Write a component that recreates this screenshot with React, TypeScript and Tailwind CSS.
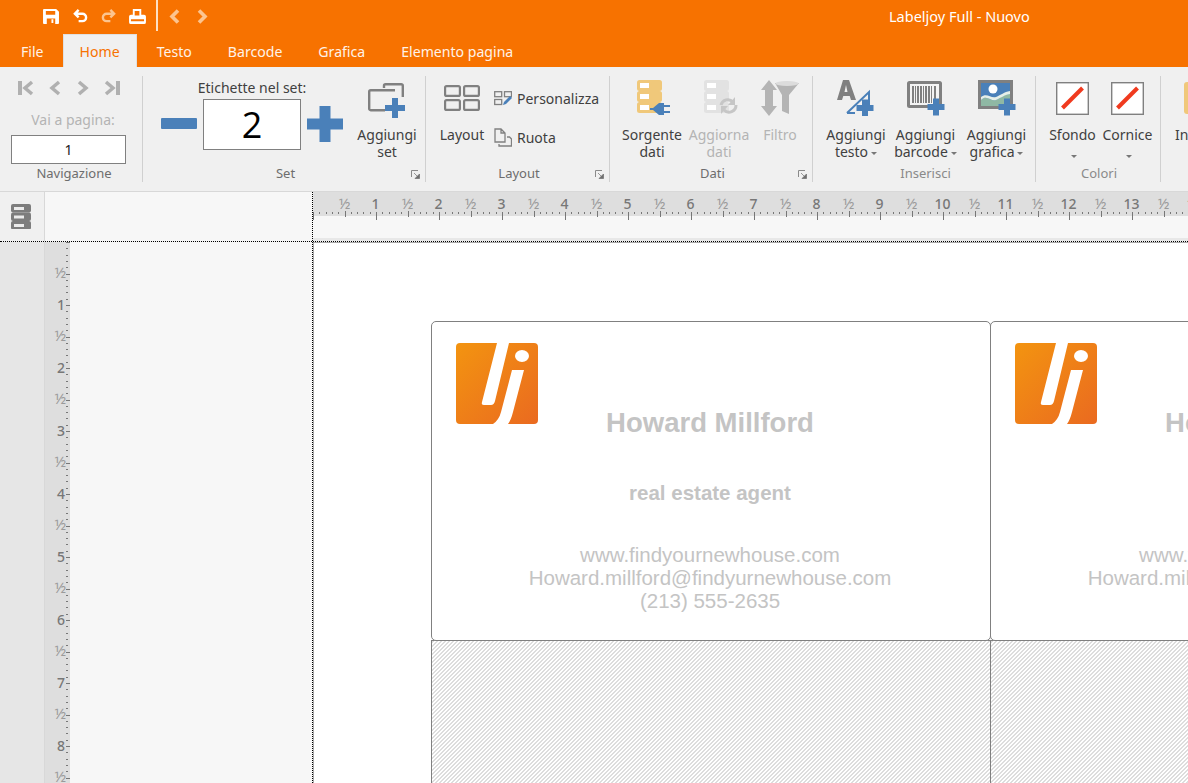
import type { ReactNode } from "react";

const BLUE = "#4a80b9";
const GRAY = "#808080";
const TICKS = Array.from({ length: 141 }, (_, i) => i);

const Plus = ({ x, y, s = 14, t = 5 }: { x: number; y: number; s?: number; t?: number }) => (
  <path
    fill={BLUE}
    stroke="none"
    d={`M${x - t / 2} ${y - s / 2}h${t}v${(s - t) / 2}h${(s - t) / 2}v${t}h${-(s - t) / 2}v${(s - t) / 2}h${-t}v${-(s - t) / 2}h${-(s - t) / 2}v${-t}h${(s - t) / 2}z`}
  />
);

const Launcher = () => (
  <svg width="9" height="9" viewBox="0 0 9 9" className="mb-[3px]">
    <path d="M.5 7V.5H7" fill="none" stroke="#8a8a8a" />
    <path d="M3 3l4 4M8.5 4v4.5H4z" stroke="#6f6f6f" fill="#6f6f6f" strokeWidth=".7" />
  </svg>
);

const Caret = () => <span className="ml-[3px] inline-block align-middle border-x-[3px] border-t-[3px] border-x-transparent border-t-[#777]" />;

function Group({ label, width, launcher, children, muted, shift = "pl-[3px]" }: { label: string; width: number; launcher?: boolean; muted?: boolean; shift?: string; children: ReactNode }) {
  return (
    <div className="flex flex-col shrink-0 h-full border-r border-[#d0d0d0]" style={{ width }}>
      <div className="flex-1 flex min-h-0">{children}</div>
      <div className={`h-[16px] pb-[2px] relative flex items-center justify-center ${shift}`}>
        <span className={`text-[13px] leading-[16px] ${muted ? "text-[#8a8a8a]" : "text-[#6d6d6d]"}`}>{label}</span>
        {launcher && <span className="absolute right-[5px] bottom-0 flex"><Launcher /></span>}
      </div>
    </div>
  );
}

function BigButton({ icon, lines, width, caret, disabled, className = "" }: { icon: ReactNode; lines: string[]; width: number; caret?: boolean; disabled?: boolean; className?: string }) {
  return (
    <div className={`flex flex-col items-center shrink-0 ${className}`} style={{ width }}>
      <div className="h-[50px] pb-[6px] flex items-center justify-center shrink-0">{icon}</div>
      <div className={`text-center text-[14px] leading-[17px] whitespace-nowrap ${disabled ? "text-[#b4b4b4]" : "text-[#404040]"}`}>
        {lines.map((l, i) => (
          <div key={l}>
            {l}
            {caret && i === lines.length - 1 && <Caret />}
          </div>
        ))}
      </div>
    </div>
  );
}

const SaveIcon = () => (
  <svg width="16" height="15" viewBox="0 0 17 16" className="mr-px"><path fill="#fff" fillRule="evenodd" d="M1 0h13l3 3v12a1 1 0 0 1-1 1H1a1 1 0 0 1-1-1V1a1 1 0 0 1 1-1zm2 2v4h10V2zm1 8v6h9v-6zm5 1h2v4H9z" /></svg>
);
const UndoIcon = ({ c = "#fff", flip = false }: { c?: string; flip?: boolean }) => (
  <svg width="15" height="14" viewBox="0 0 16 15" style={flip ? { transform: "scaleX(-1)" } : undefined}>
    <path d="M6 1L2 5l4 4M2 5h8a4 4 0 0 1 0 8H6" fill="none" stroke={c} strokeWidth="2.6" />
  </svg>
);
const PrintIcon = () => (
  <svg width="17" height="15" viewBox="0 0 18 16"><path fill="#fff" fillRule="evenodd" d="M4 0h9v6h3a2 2 0 0 1 2 2v6a2 2 0 0 1-2 2H2a2 2 0 0 1-2-2V8a2 2 0 0 1 2-2h2zm2 2v5h5V2zM2 11v2h14v-2z" /></svg>
);
const Chevron = ({ dir, c }: { dir: "l" | "r"; c: string }) => (
  <svg width="11" height="15" viewBox="0 0 11 15"><path d={dir === "l" ? "M9 1.500L3 7.500l6 6" : "M2 1.500l6 6-6 6"} fill="none" stroke={c} strokeWidth="3.600" /></svg>
);

const NavIcon = ({ d, w, bar }: { d: string; w: number; bar?: number }) => (
  <svg width={w} height="16" viewBox={`0 0 ${w} 16`}>
    <path d={d} fill="none" stroke="#b0b0b0" strokeWidth="3.500" />
    {bar !== undefined && <rect x={bar} y="1" width="4" height="14" fill="#b0b0b0" />}
  </svg>
);

const AddSetIcon = () => (
  <svg width="38" height="36" viewBox="0 0 38 36" fill="none" stroke={GRAY} strokeWidth="2.400" className="mt-[5px]">
    <path d="M16 5V2.700a1.500 1.500 0 0 1 1.500-1.500H33.300a1.500 1.500 0 0 1 1.500 1.500V14" />
    <path d="M27 7.200H2.700A1.500 1.500 0 0 0 1.200 8.700v17a1.500 1.500 0 0 0 1.500 1.500H17" />
    <Plus x={27} y={25} s={20} t={6} />
  </svg>
);
const LayoutIcon = () => (
  <svg width="36" height="26" viewBox="0 0 36 26" fill="none" stroke={GRAY} strokeWidth="2.200">
    <rect x="1.100" y="1.100" width="14.800" height="9.800" rx="1.500" />
    <rect x="20.100" y="1.100" width="14.800" height="9.800" rx="1.500" />
    <rect x="1.100" y="15.100" width="14.800" height="9.800" rx="1.500" />
    <rect x="20.100" y="15.100" width="14.800" height="9.800" rx="1.500" />
  </svg>
);
const CustomizeIcon = () => (
  <svg width="18" height="15" viewBox="0 0 18 15">
    <g fill="none" stroke={GRAY} strokeWidth="1.300">
      <rect x=".7" y=".7" width="7" height="5" />
      <rect x="10.500" y=".7" width="7" height="5" />
      <rect x=".7" y="8.500" width="7" height="5" />
    </g>
    <path d="M9 14l1-3 6-6 2 2-6 6z" fill={BLUE} />
  </svg>
);
const RotateIcon = () => (
  <svg width="18" height="19" viewBox="0 0 18 19" fill="none" stroke={GRAY} strokeWidth="1.300">
    <path d="M1 1h6l4 4v9H1zM7 1v4h4" />
    <path d="M13 9h2.500l2 2v7H5v-2" />
  </svg>
);
const Db = ({ fill }: { fill: string }) => (
  <>
    {[0, 11, 22].map((y) => (
      <g key={y}>
        <rect x="0" y={y} width="25" height="11" rx="2.500" fill={fill} />
        <rect x="3" y={y + 3} width="9" height="5" fill="#fff" />
      </g>
    ))}
  </>
);
const SourceIcon = () => (
  <svg width="35" height="36" viewBox="0 0 35 36" className="ml-[5px]">
    <Db fill="#f0c87a" />
    <path d="M13 28h3l6-5h5v12h-5l-6-5h-3zM27 25h6v2h-6zM27 31h6v2h-6z" fill={BLUE} />
  </svg>
);
const RefreshIcon = () => (
  <svg width="35" height="36" viewBox="0 0 35 36" className="ml-[4px]">
    <Db fill="#e2e2e2" />
    <g fill="none" stroke="#c6c6c6" strokeWidth="3">
      <path d="M17 25a7 7 0 0 1 12-3M32 25a7 7 0 0 1-12 5" />
    </g>
    <path d="M31 17v8h-7zM17 34v-8h7z" fill="#c6c6c6" />
  </svg>
);
const FilterIcon = () => (
  <svg width="38" height="36" viewBox="0 0 38 36">
    <path d="M8 0l8 10h-4v16h4l-8 10-8-10h4V10H0z" fill="#b4b4b4" />
    <path d="M14 3h24l-10 12v19l-7-3V15z" fill="#b4b4b4" />
    <ellipse cx="26" cy="3.500" rx="11.500" ry="2.500" fill="#dcdcdc" />
  </svg>
);
const AddTextIcon = () => (
  <svg width="38" height="36" viewBox="0 0 38 36">
    <path fillRule="evenodd" d="M6 0h6l7 20h-5l-1.300-4H6.300L5 20H0zm3 5L7.500 12h3z" fill={GRAY} />
    <path d="M10 33L32 12v14M10 33h8" stroke={BLUE} strokeWidth="2" fill="none" />
    <Plus x={28} y={28} s={17} t={6} />
  </svg>
);
const AddBarcodeIcon = () => (
  <svg width="38" height="35" viewBox="0 0 38 35">
    <rect x="1.500" y="1.500" width="32" height="24" rx="1" fill="#f4f4f4" stroke={GRAY} strokeWidth="3" />
    {[5, 8, 10, 13, 16, 18, 21, 24, 27].map((x, i) => (
      <rect key={x} x={x} y="5" width={i % 3 === 1 ? 1 : 2} height="17" fill={GRAY} />
    ))}
    <Plus x={29} y={26} s={17} t={6} />
  </svg>
);
const AddImageIcon = () => (
  <svg width="38" height="36" viewBox="0 0 38 36">
    <rect x="1.500" y="1.500" width="32" height="26" fill={BLUE} stroke={GRAY} strokeWidth="3" />
    <circle cx="15" cy="9" r="4.500" fill="#fff" />
    <path d="M3 20c6-6 10 2 15 0s8-6 14-6v12H3z" fill="#8fb8a4" />
    <path d="M3 17c6-5 10 2 15 0s8-5 14-6v3c-6 1-9 4-14 6s-9-6-15 0z" fill="#e6efe8" />
    <Plus x={29} y={27} s={17} t={6} />
  </svg>
);
const Swatch = () => (
  <svg width="33" height="33" viewBox="0 0 33 33">
    <rect x=".7" y=".7" width="31.600" height="31.600" fill="#fff" stroke={GRAY} strokeWidth="1.400" />
    <path d="M6.500 26L26.500 6" stroke="#f03a1e" strokeWidth="4" />
  </svg>
);

const TopRuler = () => (
  <svg width="875" height="49" className="block">
    <rect width="875" height="24" fill="#dedede" />
    <rect y="24" width="875" height="25" fill="#f7f7f7" />
    <rect y="46" width="875" height="3" fill="#e8e8e8" />
    {TICKS.map((i) => {
      const x = Math.round(i * 6.3) + 0.5;
      if (i % 10 === 0)
        return (
          <g key={i}>
            <line x1={x} x2={x} y1="20" y2="28" stroke="#777" />
            {i > 0 && <text x={x - 1} y="17" textAnchor="middle" fontSize="14" fontWeight="500" fontFamily="Noto Sans" fill="#777">{i / 10}</text>}
          </g>
        );
      if (i % 5 === 0)
        return (
          <g key={i}>
            <line x1={x} x2={x} y1="19" y2="25" stroke="#777" />
            <text x={x - 1} y="17" textAnchor="middle" fontSize="15" fontFamily="Noto Sans" fill="#9a9a9a">½</text>
          </g>
        );
      return <line key={i} x1={x} x2={x} y1="20" y2="22" stroke="#777" />;
    })}
  </svg>
);

const LeftRuler = () => (
  <svg width="25" height="541" className="block">
    {TICKS.slice(0, 87).map((i) => {
      const y = Math.round(i * 6.3) + 0.5;
      if (i % 10 === 0)
        return (
          <g key={i}>
            <line y1={y} y2={y} x1="21" x2="29" stroke="#777" />
            {i > 0 && <text x="20" y={y + 4} textAnchor="end" fontSize="14" fontWeight="500" fontFamily="Noto Sans" fill="#777">{i / 10}</text>}
          </g>
        );
      if (i % 5 === 0)
        return (
          <g key={i}>
            <line y1={y} y2={y} x1="21" x2="26" stroke="#777" />
            <text x="21" y={y + 3} textAnchor="end" fontSize="15" fontFamily="Noto Sans" fill="#9a9a9a">½</text>
          </g>
        );
      return <line key={i} y1={y} y2={y} x1="21" x2="23" stroke="#777" />;
    })}
  </svg>
);

const Logo = () => (
  <svg width="82" height="81" viewBox="0 0 82 81" className="block">
    <defs>
      <linearGradient id="lj" x1="0" y1="0" x2="1" y2="1">
        <stop offset="0" stopColor="#f39410" />
        <stop offset="1" stopColor="#ea6a20" />
      </linearGradient>
    </defs>
    <rect width="82" height="81" rx="4" fill="url(#lj)" />
    <path d="M41 0h12L39 58q-1 4-4 4h-7q-3 0-2-3z" fill="#fff" />
    <ellipse cx="66" cy="13" rx="7" ry="6" fill="#fff" />
    <path d="M56 27h12L57 69q-2 8-5 12H37q6-4 8-12z" fill="#fff" />
  </svg>
);

function BusinessCard({ name }: { name: string }) {
  return (
    <div className="relative w-[560px] h-[320px] border border-[#808080] rounded-[5px] bg-white pr-[2px] text-center text-[#c4c4c4] font-['Liberation_Sans',sans-serif]">
      <div className="absolute left-[24px] top-[21px]"><Logo /></div>
      <div className="pt-[84px] text-[27.5px] leading-[34px] font-bold">{name}</div>
      <div className="mt-[41px] text-[20.5px] leading-[24px] font-bold">real estate agent</div>
      <div className="mt-[38px] text-[20.5px] leading-[23px]">
        <div>www.findyournewhouse.com</div>
        <div>Howard.millford@findyurnewhouse.com</div>
        <div>(213) 555-2635</div>
      </div>
    </div>
  );
}

const tabs = ["File", "Home", "Testo", "Barcode", "Grafica", "Elemento pagina"];
const hatch =
  "w-[560px] h-[200px] border-x border-t border-[#808080] bg-[linear-gradient(135deg,#dddddd_25%,#ffffff_25%,#ffffff_50%,#dddddd_50%,#dddddd_75%,#ffffff_75%)] bg-[length:4px_4px]";

export default function App() {
  return (
    <div className="w-[1188px] h-[783px] overflow-hidden flex flex-col bg-[#f0f0f0] font-['Noto_Sans',sans-serif]">
      {/* title bar */}
      <div className="h-[34px] shrink-0 bg-[#f77200] flex items-start relative">
        <div className="flex items-center h-[32px] pl-[43px] gap-[13px]">
          <SaveIcon />
          <UndoIcon />
          <UndoIcon c="#fcc48f" flip />
          <PrintIcon />
        </div>
        <div className="w-[2px] h-[31px] bg-[#fde0c4] ml-[10px]" />
        <div className="flex items-center h-[32px] ml-[11px] gap-[17px]">
          <Chevron dir="l" c="#fcc48f" />
          <Chevron dir="r" c="#fcc48f" />
        </div>
        <span className="absolute left-[889px] top-[7px] text-[14.5px] leading-[19px] text-white whitespace-nowrap">Labeljoy Full - Nuovo</span>
      </div>
      {/* tabs */}
      <div className="h-[33px] shrink-0 bg-[#f77200] flex pl-[3px]">
        {tabs.map((t) => (
          <div
            key={t}
            className={
              t === "Home"
                ? "ml-[1px] pl-[16px] pr-[16px] mr-[2px] flex items-center bg-[#f0f0f0] text-[#f77200] text-[14.1px] pt-[2px] border-x border-t border-[#e0e0e0]"
                : "px-[18px] flex items-center text-[#fff3e8] text-[14.1px] pt-[2px]"
            }
          >
            {t}
          </div>
        ))}
      </div>
      {/* ribbon */}
      <div className="h-[125px] shrink-0 border-b border-[#d8d8d8] pt-[9px] pb-[9px] flex overflow-hidden">
        <Group label="Navigazione" width={143} shift="pl-[6px]">
          <div className="w-full flex flex-col">
            <div className="flex items-center h-[24px] pl-[18px]">
              <NavIcon w={16} bar={0} d="M14 2L7 8l7 6" />
              <span className="w-[14px]" />
              <NavIcon w={13} d="M11 2L4 8l7 6" />
              <span className="w-[16px]" />
              <NavIcon w={13} d="M2 2l7 6-7 6" />
              <span className="w-[14px]" />
              <NavIcon w={16} bar={12} d="M2 2l7 6-7 6" />
            </div>
            <div className="mt-[10px] text-center pl-[4px] text-[14px] leading-[20px] text-[#b4b4b4]">Vai a pagina:</div>
            <div className="ml-[11px] mt-[5px] w-[115px] h-[29px] bg-white border border-[#808080] flex items-center justify-center text-[14px] text-[#222]">1</div>
          </div>
        </Group>
        <Group label="Set" width={283} launcher>
          <div className="flex items-start pl-[18px]">
            <div className="w-[36px] h-[11px] mt-[42px] bg-[#4a80b9] rounded-[1px]" />
            <div className="ml-[6px] w-[98px] flex flex-col items-center">
              <div className="text-[14px] leading-[23px] h-[23px] text-[#404040] whitespace-nowrap">Etichette nel set:</div>
              <div className="w-[98px] h-[51px] bg-white border border-[#808080] flex items-center justify-center text-[36px] leading-none text-black font-['Open_Sans',sans-serif]">2</div>
            </div>
            <div className="ml-[6px] mt-[30px]"><svg width="36" height="36" viewBox="0 0 36 36"><Plus x={18} y={18} s={36} t={11} /></svg></div>
            <BigButton className="ml-[10px]" width={68} icon={<AddSetIcon />} lines={["Aggiungi", "set"]} />
          </div>
        </Group>
        <Group label="Layout" width={184} launcher>
          <div className="flex items-start pl-[9px]">
            <BigButton width={54} icon={<LayoutIcon />} lines={["Layout"]} />
            <div className="ml-[5px] flex flex-col text-[14px] text-[#404040]">
              <div className="flex items-center gap-[5px] h-[20px] mt-[12px]"><CustomizeIcon /><span>Personalizza</span></div>
              <div className="flex items-center gap-[5px] h-[20px] mt-[19px]"><RotateIcon /><span>Ruota</span></div>
            </div>
          </div>
        </Group>
        <Group label="Dati" width={203} launcher>
          <div className="flex items-start pl-[6px]">
            <BigButton width={72} icon={<SourceIcon />} lines={["Sorgente", "dati"]} />
            <BigButton width={62} disabled icon={<RefreshIcon />} lines={["Aggiorna", "dati"]} />
            <BigButton width={60} disabled icon={<FilterIcon />} lines={["Filtro"]} />
          </div>
        </Group>
        <Group label="Inserisci" width={223} muted>
          <div className="flex items-start pl-[9px]">
            <BigButton width={68} caret icon={<AddTextIcon />} lines={["Aggiungi", "testo"]} />
            <BigButton width={71} caret icon={<AddBarcodeIcon />} lines={["Aggiungi", "barcode"]} />
            <BigButton width={71} caret icon={<AddImageIcon />} lines={["Aggiungi", "grafica"]} />
          </div>
        </Group>
        <Group label="Colori" width={125} muted shift="pl-[2px]">
          <div className="flex items-start pl-[9px]">
            {["Sfondo", "Cornice"].map((l) => (
              <div key={l} className="w-[55px] flex flex-col items-center">
                <div className="h-[50px] pb-[6px] flex items-center justify-center"><Swatch /></div>
                <div className="text-[14px] leading-[17px] text-[#404040] whitespace-nowrap">{l}</div>
                <div className="mt-[12px] flex"><Caret /></div>
              </div>
            ))}
          </div>
        </Group>
        <div className="flex-1 flex items-start pl-[14px] relative">
          <div className="flex flex-col">
            <div className="h-[50px] pb-[6px] flex items-center pl-[9px]"><div className="w-[12px] h-[32px] bg-[#f0c87a] rounded-l-[3px]" /></div>
            <span className="text-[14px] leading-[17px] text-[#404040]">In</span>
          </div>
        </div>
      </div>
      {/* ruler row */}
      <div className="h-[50px] shrink-0 flex border-b border-dotted border-black">
        <div className="w-[45px] shrink-0 border-r border-[#d8d8d8] flex items-center justify-center pb-[1px] pr-[2px]">
          <svg width="20" height="25" viewBox="0 0 20 25">
            {[0, 8.500, 17].map((y) => (
              <g key={y}>
                <rect x="0" y={y} width="20" height="8.500" rx="2" fill="#7d7d7d" />
                <rect x="3" y={y + 3} width="10" height="3" fill="#ececec" />
              </g>
            ))}
          </svg>
        </div>
        <div className="w-[268px] shrink-0 bg-[#f7f7f7] border-r border-dotted border-black" />
        <div className="flex-1 min-w-0 overflow-hidden"><TopRuler /></div>
      </div>
      {/* work area */}
      <div className="flex-1 min-h-0 flex">
        <div className="w-[45px] shrink-0 bg-[#e6e6e6] border-r border-[#d8d8d8]" />
        <div className="w-[25px] shrink-0 bg-[#dedede] overflow-hidden"><LeftRuler /></div>
        <div className="w-[243px] shrink-0 bg-[#f7f7f7] border-r border-dotted border-black" />
        <div className="flex-1 min-w-0 bg-white overflow-hidden pl-[118px] pt-[79px] shadow-[inset_1px_0_0_#a8a8a8,inset_0_1px_0_#a8a8a8]">
          <div className="grid grid-cols-[559px_559px] w-[1118px]">
            <BusinessCard name="Howard Millford" />
            <BusinessCard name="Howard Millford" />
            <div className={`${hatch} -mt-px`} />
            <div className={`${hatch} -mt-px`} />
          </div>
        </div>
      </div>
    </div>
  );
}
